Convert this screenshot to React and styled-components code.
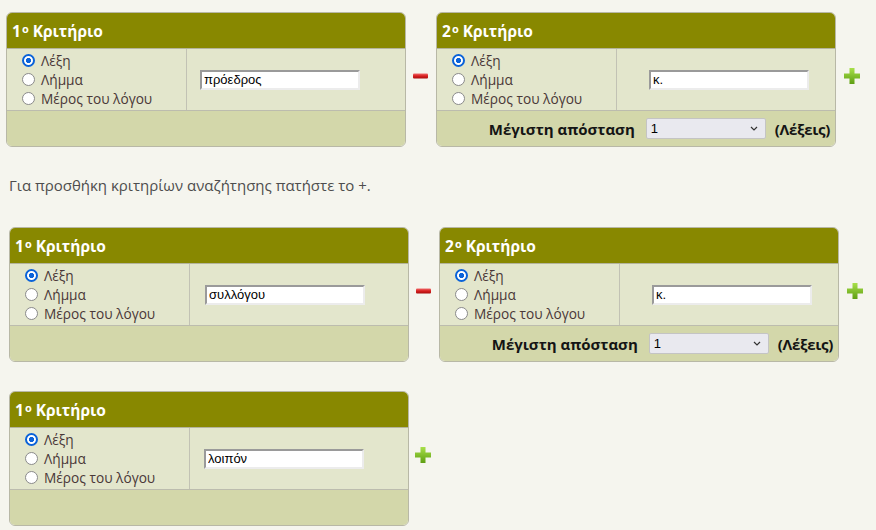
import styled, { createGlobalStyle } from "styled-components";

const GlobalStyle = createGlobalStyle`
  body {
    margin: 0;
    background: #f5f5ee;
    font-family: "Open Sans", "DejaVu Sans", sans-serif;
  }
`;

const Page = styled.div`
  padding-top: 12px;
  width: 876px;
  height: 530px;
  box-sizing: border-box;
  overflow: hidden;
`;

const Group = styled.div`
  display: flex;
  align-items: center;
  margin-left: ${(p) => p.$left}px;
  margin-top: ${(p) => p.$top || 0}px;
`;

const Hint = styled.p`
  margin: 28px 0 32px 9px;
  font-size: 15px;
  line-height: 20px;
  color: #4d4d4d;
`;

const Box = styled.div`
  width: 400px;
  box-sizing: border-box;
  border: 1px solid #b8b8a6;
  border-radius: 6px;
  overflow: hidden;
`;

const Header = styled.div`
  height: 35px;
  background: #888800;
  color: #fff;
  font-weight: 700;
  font-size: 15.5px;
  display: flex;
  align-items: center;
  padding-left: 5px;
  border-bottom: 1px solid #b4b49c;

  sup {
    font-size: 11px;
    position: relative;
    top: -2px;
    margin: 0 4px 0 1px;
  }
`;

const Body = styled.div`
  display: grid;
  grid-template-columns: 180px 1fr;
  height: 61px;
  background: #e3e6cc;
  border-bottom: 1px solid #bcbcae;
`;

const Choices = styled.div`
  border-right: 1px solid #c2c2b4;
  padding: 2px 0 0 15px;
`;

const Choice = styled.label`
  display: flex;
  align-items: center;
  gap: 6px;
  height: 19px;
  font-size: 13.7px;
  color: #4a3838;
`;

const Radio = styled.input.attrs({ type: "radio" })`
  appearance: none;
  margin: 0;
  width: 13px;
  height: 13px;
  border-radius: 50%;
  border: 1.5px solid #8a8a8a;
  background: #fff;
  box-sizing: border-box;

  &:checked {
    border: 2px solid #0b63d9;
    background: radial-gradient(circle, #0b63d9 0 2.4px, #fff 2.9px);
  }
`;

const Field = styled.div`
  display: flex;
  align-items: center;
  padding-left: ${(p) => p.$pad}px;
`;

const TextBox = styled.input`
  width: 160px;
  height: 20px;
  box-sizing: border-box;
  border: 2px solid;
  border-color: #9a9a9a #ececec #ececec #9a9a9a;
  background: #fff;
  padding: 0 2px;
  font-family: "Liberation Sans", Arial, sans-serif;
  font-size: 13px;
  color: #000;
  outline: none;
`;

const Footer = styled.div`
  height: 35px;
  background: #d3d7aa;
  display: flex;
  align-items: center;
  justify-content: flex-end;
  padding-right: 5px;
`;

const Strong = styled.span`
  font-weight: 700;
  font-size: 15px;
  color: #141414;
  letter-spacing: ${(p) => p.$tight ? "-0.3px" : "0"};
`;

const SelectWrap = styled.div`
  position: relative;
  display: flex;
  margin: 0 9px 0 11px;

  svg {
    position: absolute;
    right: 8px;
    top: 8px;
    pointer-events: none;
  }
`;

const Select = styled.select`
  appearance: none;
  width: 120px;
  height: 21px;
  border: 1px solid #c4c4c4;
  border-radius: 2px;
  background: #e9e9ef;
  font-family: "Liberation Sans", Arial, sans-serif;
  font-size: 13px;
  color: #000;
  padding: 0 4px;
`;

const IconSlot = styled.div`
  display: flex;
  margin: 0 ${(p) => p.$right}px 8px ${(p) => p.$left}px;
`;

const Minus = () => (
  <svg width="15" height="6" viewBox="0 0 15 6">
    <defs>
      <linearGradient id="mg" x1="0" y1="0" x2="0" y2="1">
        <stop offset="0" stopColor="#f06a6a" />
        <stop offset="0.5" stopColor="#d81f1f" />
        <stop offset="1" stopColor="#a80e0e" />
      </linearGradient>
    </defs>
    <rect x="0" y="0.5" width="15" height="5" rx="1" fill="url(#mg)" />
  </svg>
);

const Plus = () => (
  <svg width="16" height="16" viewBox="0 0 16 16">
    <defs>
      <linearGradient id="pg" x1="0" y1="0" x2="0" y2="1">
        <stop offset="0" stopColor="#a8e04a" />
        <stop offset="1" stopColor="#5e9e12" />
      </linearGradient>
    </defs>
    <path d="M5.5 0h5v5.5H16v5h-5.5V16h-5v-5.5H0v-5h5.5z" fill="url(#pg)" />
  </svg>
);

const Chevron = () => (
  <svg width="8" height="5" viewBox="0 0 8 5">
    <path d="M1 1l3 3 3-3" fill="none" stroke="#333" strokeWidth="1.2" />
  </svg>
);

const Criterion = ({ id, n, value, pad, distance }) => (
  <Box>
    <Header>
      {n}
      <sup>o</sup>Κριτήριο
    </Header>
    <Body>
      <Choices>
        <Choice>
          <Radio name={id} defaultChecked />
          Λέξη
        </Choice>
        <Choice>
          <Radio name={id} />
          Λήμμα
        </Choice>
        <Choice>
          <Radio name={id} />
          Μέρος του λόγου
        </Choice>
      </Choices>
      <Field $pad={pad}>
        <TextBox defaultValue={value} />
      </Field>
    </Body>
    <Footer>
      {distance && (
        <>
          <Strong>Μέγιστη απόσταση</Strong>
          <SelectWrap>
            <Select defaultValue="1">
              <option>1</option>
              <option>2</option>
              <option>3</option>
            </Select>
            <Chevron />
          </SelectWrap>
          <Strong $tight>(Λέξεις)</Strong>
        </>
      )}
    </Footer>
  </Box>
);

export default function App() {
  return (
    <>
      <GlobalStyle />
      <Page>
        <Group $left={6}>
          <Criterion id="a1" n={1} value="πρόεδρος" pad={13} />
          <IconSlot $left={7} $right={8}>
            <Minus />
          </IconSlot>
          <Criterion id="a2" n={2} value="κ." pad={32} distance />
          <IconSlot $left={8} $right={0}>
            <Plus />
          </IconSlot>
        </Group>
        <Hint>Για προσθήκη κριτηρίων αναζήτησης πατήστε το +.</Hint>
        <Group $left={9}>
          <Criterion id="b1" n={1} value="συλλόγου" pad={15} />
          <IconSlot $left={7} $right={8}>
            <Minus />
          </IconSlot>
          <Criterion id="b2" n={2} value="κ." pad={32} distance />
          <IconSlot $left={8} $right={0}>
            <Plus />
          </IconSlot>
        </Group>
        <Group $left={9} $top={29}>
          <Criterion id="c1" n={1} value="λοιπόν" pad={14} />
          <IconSlot $left={6} $right={0}>
            <Plus />
          </IconSlot>
        </Group>
      </Page>
    </>
  );
}
